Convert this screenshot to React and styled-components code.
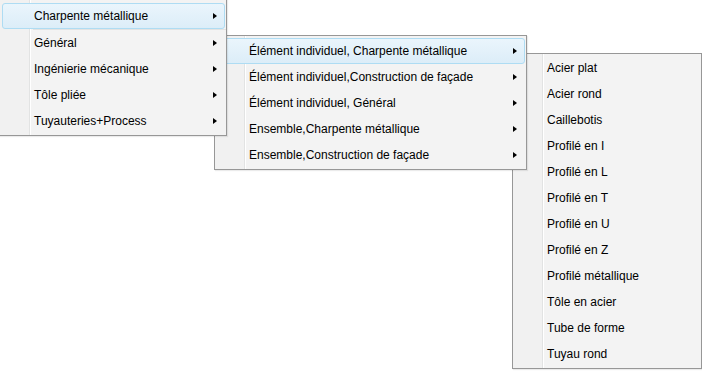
import React from 'react';
import styled, { createGlobalStyle } from 'styled-components';

const GlobalStyle = createGlobalStyle`
    html, body {
        margin: 0;
        background: #ffffff;
    }
    body {
        font-family: 'Liberation Sans', Arial, sans-serif;
        font-size: 12px;
        color: #000;
    }
`;

const Stage = styled.div`
    position: relative;
    width: 702px;
    height: 371px;
    overflow: hidden;
    background: #fff;
`;

// popup menus lie over each other, so they sit on the canvas by coordinates
const Menu = styled.ul`
    position: absolute;
    left: ${p => p.$left}px;
    top: ${p => p.$top}px;
    width: ${p => p.$width}px;
    z-index: ${p => p.$z};
    box-sizing: border-box;
    margin: 0;
    padding: ${p => p.$padTop}px 0 1px 0;
    list-style: none;
    border: 1px solid #979797;
    background:
        linear-gradient(to right,
            #f1f1f1 0, #f1f1f1 29px,
            #e2e3e3 29px, #e2e3e3 30px,
            #ffffff 30px, #ffffff 31px,
            #f3f3f3 31px);
    box-shadow: 1px 1px 1px rgba(0, 0, 0, 0.08);
`;

const Item = styled.li`
    position: relative;
    display: flex;
    align-items: center;
    height: 26px;
    box-sizing: border-box;
    margin: 0 1px 0 2px;
    padding: 0 0 0 31px;
    border: 1px solid ${p => (p.$active ? '#aedcf3' : 'transparent')};
    border-radius: 3px;
    background: ${p => (p.$active
        ? 'linear-gradient(to bottom, #eaf5fc, #dcedf8)'
        : 'transparent')};
    white-space: nowrap;
`;

const Label = styled.span`
    flex: 1;
    line-height: 16px;
`;

const Arrow = styled.span`
    width: 0;
    height: 0;
    margin-right: 7px;
    border-left: 4px solid #000;
    border-top: 3.5px solid transparent;
    border-bottom: 3.5px solid transparent;
`;

const Separator = styled.li`
    height: 1px;
    margin-left: 33px;
    background: #e2e3e3;
`;

const topMenu = ['Général', 'Ingénierie mécanique', 'Tôle pliée', 'Tuyauteries+Process'];

const subMenu = [
    'Élément individuel, Charpente métallique',
    'Élément individuel,Construction de façade',
    'Élément individuel, Général',
    'Ensemble,Charpente métallique',
    'Ensemble,Construction de façade',
];

const leafMenu = [
    'Acier plat', 'Acier rond', 'Caillebotis', 'Profilé en I', 'Profilé en L',
    'Profilé en T', 'Profilé en U', 'Profilé en Z', 'Profilé métallique',
    'Tôle en acier', 'Tube de forme', 'Tuyau rond',
];

const App = () => {
    return (
        <Stage>
            <GlobalStyle />
            <Menu $left={-1} $top={-1} $width={228} $z={3} $padTop={3}>
                <Item $active>
                    <Label>Charpente métallique</Label>
                    <Arrow />
                </Item>
                <Separator />
                {topMenu.map(name => (
                    <Item key={name}>
                        <Label>{name}</Label>
                        <Arrow />
                    </Item>
                ))}
            </Menu>
            <Menu $left={214} $top={35} $width={313} $z={2} $padTop={2}>
                {subMenu.map((name, i) => (
                    <Item key={name} $active={i === 0}>
                        <Label>{name}</Label>
                        <Arrow />
                    </Item>
                ))}
            </Menu>
            <Menu $left={512} $top={53} $width={190} $z={1} $padTop={1}>
                {leafMenu.map(name => (
                    <Item key={name}>
                        <Label>{name}</Label>
                    </Item>
                ))}
            </Menu>
        </Stage>
    );
};

export default App;
